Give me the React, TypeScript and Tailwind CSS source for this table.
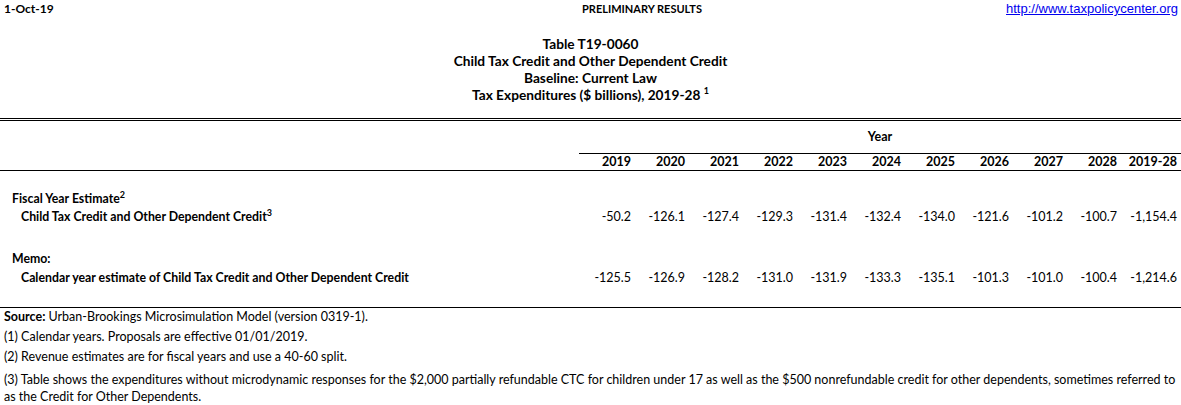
import React from 'react'

const years = ['2019', '2020', '2021', '2022', '2023', '2024', '2025', '2026', '2027', '2028', '2019-28']

const fiscal = ['-50.2', '-126.1', '-127.4', '-129.3', '-131.4', '-132.4', '-134.0', '-121.6', '-101.2', '-100.7', '-1,154.4']
const calendar = ['-125.5', '-126.9', '-128.2', '-131.0', '-131.9', '-133.3', '-135.1', '-101.3', '-101.0', '-100.4', '-1,214.6']

function Cells({ values, bold }: { values: string[]; bold?: boolean }) {
  return (
    <div className="flex">
      {values.map((v, i) => (
        <div
          key={i}
          className={
            (i === values.length - 1 ? 'w-[62px] pr-[4px] ' : 'w-[54px] pr-[2px] ') +
            'text-right whitespace-nowrap ' +
            (bold ? 'font-bold' : '')
          }
        >
          {v}
        </div>
      ))}
    </div>
  )
}

export default function App() {
  return (
    <div className="w-[1181px] h-[405px] overflow-hidden bg-white text-black font-['Lato',sans-serif] text-[12.5px]">
      {/* Top bar */}
      <div className="h-[18px] flex items-center">
        <div className="w-[582px] pl-[4px] font-bold text-[12px]">1-Oct-19</div>
        <div className="flex-1 font-bold text-[11px]">PRELIMINARY RESULTS</div>
        <a className="pr-[3px] text-[13px] text-[#0000ee] underline font-['Liberation_Sans',sans-serif]">
          http://www.taxpolicycenter.org
        </a>
      </div>

      {/* Title */}
      <div className="mt-[17px] text-center font-bold text-[13.7px] leading-[17px]">
        <div>Table T19-0060</div>
        <div>Child Tax Credit and Other Dependent Credit</div>
        <div>Baseline: Current Law</div>
        <div>
          Tax Expenditures ($ billions), 2019-28 <sup className="text-[9px] font-bold -top-[0.7em]">1</sup>
        </div>
      </div>

      {/* Table head */}
      <div className="mt-[15px] border-t-[3px] border-double border-black">
        <div className="flex h-[33px]">
          <div className="w-[579px]" />
          <div className="flex-1 flex items-center justify-center font-bold border-b border-black">Year</div>
        </div>
        <div className="flex h-[17px] items-center border-b border-black">
          <div className="w-[579px]" />
          <Cells values={years} bold />
        </div>
      </div>

      {/* Table body */}
      <div className="pt-[20px]">
        <div className="h-[17px] flex items-center pl-[12px] font-bold text-[12.3px]">
          Fiscal Year Estimate<sup className="text-[9px] font-bold">2</sup>
        </div>
        <div className="h-[18px] flex items-center">
          <div className="w-[579px] pl-[21px] font-bold text-[12.3px]">
            Child Tax Credit and Other Dependent Credit<sup className="text-[9px] font-bold">3</sup>
          </div>
          <Cells values={fiscal} />
        </div>
        <div className="h-[23px]" />
        <div className="h-[20px] flex items-center pl-[12px] font-bold text-[12.3px]">Memo:</div>
        <div className="h-[18px] flex items-center">
          <div className="w-[579px] pl-[21px] font-bold text-[12.3px]">
            Calendar year estimate of Child Tax Credit and Other Dependent Credit
          </div>
          <Cells values={calendar} />
        </div>
        <div className="h-[20px]" />
      </div>

      {/* Notes */}
      <div className="border-t border-black px-[4px]">
        <div className="h-[19px] flex items-center">
          <span className="font-bold">Source:</span>&nbsp;Urban-Brookings Microsimulation Model (version 0319-1).
        </div>
        <div className="h-[20px] flex items-center">(1) Calendar years. Proposals are effective 01/01/2019.</div>
        <div className="h-[20px] flex items-center">(2) Revenue estimates are for fiscal years and use a 40-60 split.</div>
        <div className="pt-[4px] leading-[17px] whitespace-nowrap">
          (3) Table shows the expenditures without microdynamic responses for the $2,000 partially refundable CTC for
          children under 17 as well as the $500 nonrefundable credit for other dependents, sometimes referred to
          <br />
          as the Credit for Other Dependents.
        </div>
      </div>
    </div>
  )
}
